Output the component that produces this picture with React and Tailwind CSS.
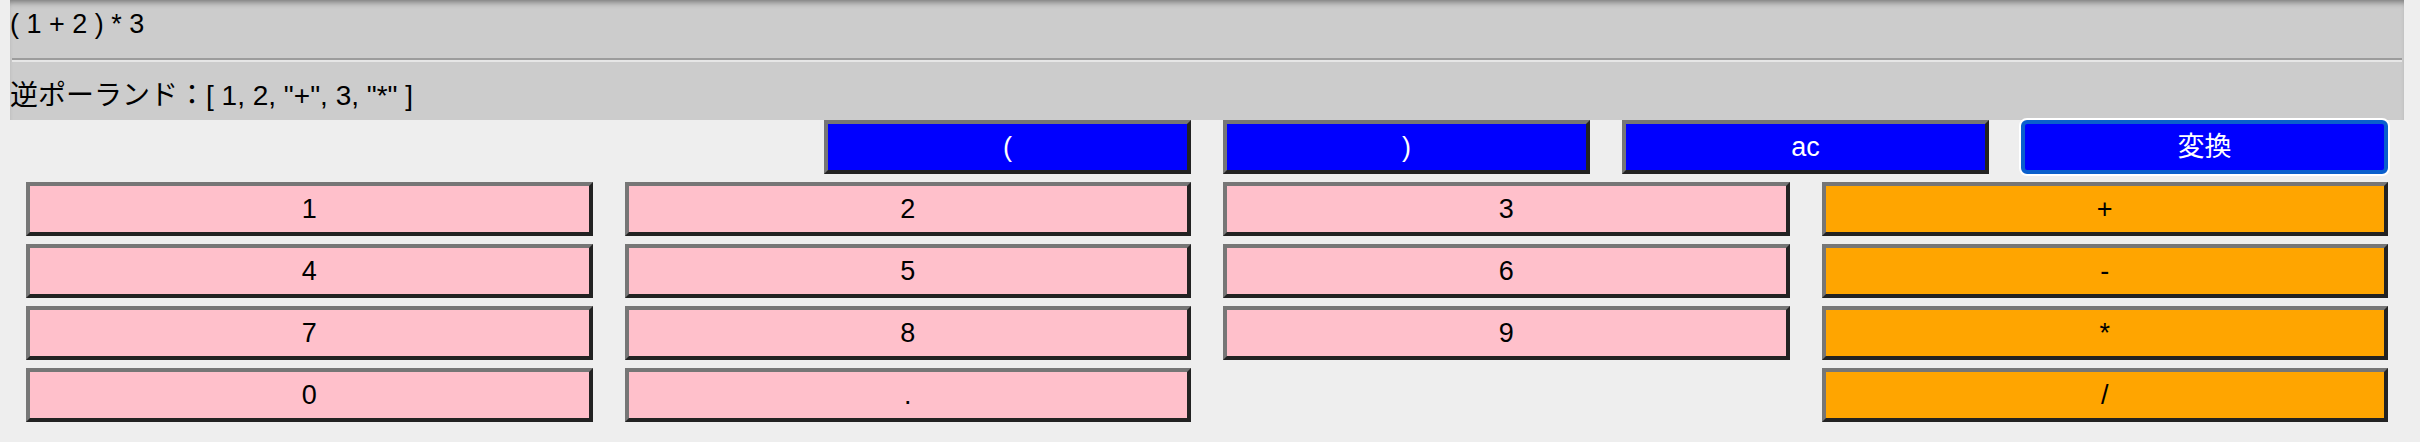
import React, { useState } from 'react';

const numberKeys = [
  { label: '1', kind: 'num' },
  { label: '2', kind: 'num' },
  { label: '3', kind: 'num' },
  { label: '+', kind: 'op' },
  { label: '4', kind: 'num' },
  { label: '5', kind: 'num' },
  { label: '6', kind: 'num' },
  { label: '-', kind: 'op' },
  { label: '7', kind: 'num' },
  { label: '8', kind: 'num' },
  { label: '9', kind: 'num' },
  { label: '*', kind: 'op' },
  { label: '0', kind: 'num' },
  { label: '.', kind: 'num' },
  { label: '', kind: 'blank' },
  { label: '/', kind: 'op' },
];

const bevel =
  'h-[54px] border-4 border-t-[#767676] border-l-[#767676] border-b-[#222222] border-r-[#222222] flex items-center justify-center text-[27px] leading-none';

function App() {
  const [expr] = useState('( 1 + 2 ) * 3');
  const [rpn] = useState('[ 1, 2, "+", 3, "*" ]');

  return (
    <main className="min-h-screen w-full bg-[#eeeeee] font-['Liberation_Sans','Noto_Sans_CJK_JP',sans-serif] text-black overflow-hidden">
      {/* Display panel */}
      <div className="ml-[10px] w-[2394px] h-[120px] bg-[#cccccc] flex flex-col shadow-[inset_0_6px_6px_-4px_rgba(0,0,0,0.45)]">
        <div className="h-[58px] pt-[9px] text-[27px] leading-[30px] whitespace-pre">{expr}</div>
        <div className="mx-[2px] border-t-2 border-t-[#9c9c9c] border-b-2 border-b-[#e6e6e6]"></div>
        <div className="pt-[19px] text-[28px] leading-[30px] whitespace-pre">逆ポーランド：{rpn}</div>
      </div>

      {/* Keypad */}
      <div className="ml-[26px] w-[2362px] grid grid-cols-12 gap-x-[32px] gap-y-[8px]">
        <button className={`${bevel} col-start-5 col-span-2 bg-[#0000ff] text-white`}>(</button>
        <button className={`${bevel} col-span-2 bg-[#0000ff] text-white`}>)</button>
        <button className={`${bevel} col-span-2 bg-[#0000ff] text-white`}>ac</button>
        <button className="col-span-2 h-[54px] border-4 border-[#0a5fcd] rounded-[6px] shadow-[0_0_0_2px_#ffffff] bg-[#0000ff] text-white flex items-center justify-center text-[27px] leading-none">
          変換
        </button>

        {numberKeys.map((k, i) =>
          k.kind === 'blank' ? (
            <div key={i} className="col-span-3 h-[54px]"></div>
          ) : (
            <button
              key={i}
              className={`${bevel} col-span-3 ${k.kind === 'op' ? 'bg-[#ffa500]' : 'bg-[#ffc0cb]'}`}
            >
              {k.label}
            </button>
          )
        )}
      </div>
    </main>
  );
}

export default App;
